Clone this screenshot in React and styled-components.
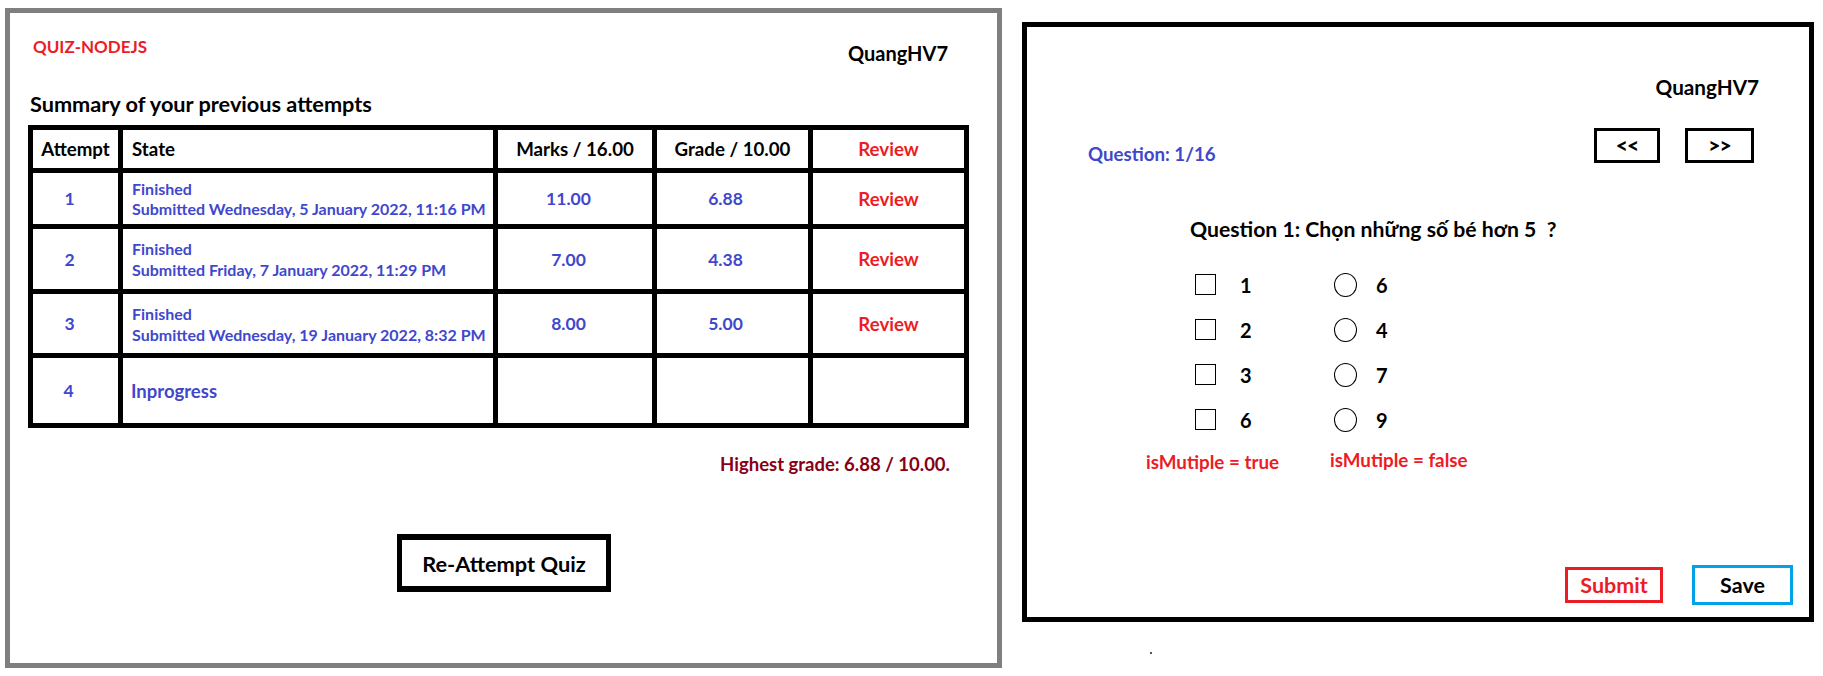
import React from "react";
import styled, { createGlobalStyle } from "styled-components";

const RED = "#ED1C24";
const BLUE = "#3F48CC";
const DARK_RED = "#880015";
const CYAN = "#00A2E8";

const GlobalStyle = createGlobalStyle`
  * { box-sizing: border-box; }
  html, body { margin: 0; padding: 0; background: #ffffff; }
  body {
    font-family: Lato, "Open Sans", "Liberation Sans", sans-serif;
    font-weight: 700;
    color: #000000;
  }
`;

const Page = styled.div`
  width: 1823px;
  height: 676px;
  padding: 8px 0 0 5px;
  display: flex;
  align-items: flex-start;
  gap: 20px;
  overflow: hidden;
`;

/* ---------- Left panel: attempts summary ---------- */

const SummaryPanel = styled.section`
  width: 997px;
  height: 660px;
  border: 5px solid #7f7f7f;
  padding: 0 28px 0 18px;
  display: flex;
  flex-direction: column;
`;

const Header = styled.header`
  height: 79px;
  padding-top: 22px;
  display: flex;
  justify-content: space-between;
  align-items: flex-start;
`;

const Brand = styled.div`
  margin-left: 5px;
  color: ${RED};
  font-size: 17px;
  line-height: 24px;
`;

const UserName = styled.div`
  font-size: ${(p) => p.$size}px;
  line-height: 24px;
  margin: ${(p) => p.$margin};
`;

const SectionTitle = styled.h2`
  margin: 0 0 9px 2px;
  font-size: 21.7px;
  line-height: 24px;
  font-weight: 700;
`;

const AttemptsGrid = styled.div`
  display: grid;
  grid-template-columns: 85px 370px 154px 151px 151px;
  grid-template-rows: 38px 51px 60px 59px 65px;
  gap: 5px;
  padding: 5px;
  background: #000000;
  width: 941px;
`;

const Cell = styled.div`
  background: #ffffff;
  display: flex;
  align-items: center;
  justify-content: ${(p) => p.$justify || "center"};
  padding: ${(p) => p.$pad || "0"};
  color: ${(p) => p.$color || "#000"};
  font-size: ${(p) => p.$size || 18.7}px;
  white-space: nowrap;
`;

const StateLines = styled.div`
  display: flex;
  flex-direction: column;
  color: ${BLUE};
  font-size: 16px;
  line-height: ${(p) => p.$lh}px;
`;

const Highest = styled.div`
  margin: 24px 19px 0 0;
  text-align: right;
  color: ${DARK_RED};
  font-size: 18.5px;
  line-height: 24px;
`;

const ReattemptButton = styled.button`
  align-self: center;
  margin: 58px 0 0 11px;
  width: 214px;
  height: 58px;
  border: solid #000000;
  border-width: 6px 5px;
  background: #ffffff;
  font-family: inherit;
  font-weight: 700;
  font-size: 21.8px;
  color: #000000;
  padding: 0;
  display: flex;
  align-items: center;
  justify-content: center;
`;

/* ---------- Right panel: question ---------- */

const RightColumn = styled.div`
  margin-top: 14px;
  display: flex;
  flex-direction: column;
`;

const QuestionPanel = styled.section`
  width: 792px;
  height: 600px;
  border: 5px solid #000000;
  display: flex;
  flex-direction: column;
`;

const NavRow = styled.div`
  margin-top: 29px;
  padding: 0 55px 0 61px;
  display: flex;
  align-items: flex-start;
`;

const Counter = styled.div`
  flex: 1;
  margin-top: 14px;
  color: ${BLUE};
  font-size: 18.7px;
  line-height: 24px;
`;

const NavButtons = styled.div`
  display: flex;
  gap: 25px;
`;

const NavButton = styled.button`
  width: ${(p) => p.$w}px;
  height: 35px;
  border: 3px solid #000000;
  background: #ffffff;
  font-family: inherit;
  font-weight: 900;
  font-size: 21px;
  letter-spacing: -1px;
  color: #000;
  padding: 0 0 3px;
  display: flex;
  align-items: center;
  justify-content: center;
`;

const QuestionText = styled.h3`
  margin: 50px 0 0 163px;
  font-size: 21.2px;
  line-height: 26px;
  font-weight: 700;
`;

const Options = styled.div`
  margin: 20px 0 0 168px;
  display: grid;
  grid-template-columns: 139px auto;
  grid-auto-rows: 45px;
`;

const Option = styled.label`
  display: flex;
  align-items: center;
  gap: ${(p) => p.$gap}px;
  font-size: 20px;
  line-height: 24px;
`;

const Checkbox = styled.span`
  width: 21px;
  height: 21px;
  border: 1px solid #000;
  background: #fff;
`;

const Radio = styled.span`
  width: 23px;
  height: 24px;
  border: 1px solid #000;
  border-radius: 50%;
  background: #fff;
`;

const Notes = styled.div`
  margin: 9px 0 0 119px;
  display: grid;
  grid-template-columns: 184px auto;
  align-items: start;
  color: ${RED};
  font-size: 18.8px;
  line-height: 22px;
`;

const Note = styled.span`
  margin-top: ${(p) => (p.$lift ? -2 : 0)}px;
`;

const Footer = styled.div`
  margin-top: auto;
  padding: 0 16px 12px 0;
  display: flex;
  justify-content: flex-end;
  align-items: center;
  gap: 29px;
`;

const FooterButton = styled.button`
  width: ${(p) => p.$w}px;
  height: ${(p) => p.$h}px;
  border: 3px solid ${(p) => p.$border};
  color: ${(p) => p.$color};
  background: #ffffff;
  font-family: inherit;
  font-weight: 700;
  font-size: 21.5px;
  padding: 0;
  display: flex;
  align-items: center;
  justify-content: center;
`;

const Speck = styled.span`
  display: block;
  margin: 30px 0 0 128px;
  width: 2px;
  height: 2px;
  background: #555;
`;

const attempts = [
  {
    n: "1",
    submitted: "Submitted Wednesday, 5 January 2022, 11:16 PM",
    marks: "11.00",
    grade: "6.88",
    lh: 20,
  },
  {
    n: "2",
    submitted: "Submitted Friday, 7 January 2022, 11:29 PM",
    marks: "7.00",
    grade: "4.38",
    lh: 21,
  },
  {
    n: "3",
    submitted: "Submitted Wednesday, 19 January 2022, 8:32 PM",
    marks: "8.00",
    grade: "5.00",
    lh: 21,
  },
];

const options = [
  ["1", "6"],
  ["2", "4"],
  ["3", "7"],
  ["6", "9"],
];

export default function App() {
  return (
    <>
      <GlobalStyle />
      <Page>
        <SummaryPanel>
          <Header>
            <Brand>QUIZ-NODEJS</Brand>
            <UserName $size={20} $margin="6px 21px 0 0">QuangHV7</UserName>
          </Header>
          <SectionTitle>Summary of your previous attempts</SectionTitle>
          <AttemptsGrid>
            <Cell>Attempt</Cell>
            <Cell $justify="flex-start" $pad="0 0 0 9px">State</Cell>
            <Cell>Marks / 16.00</Cell>
            <Cell>Grade / 10.00</Cell>
            <Cell $color={RED}>Review</Cell>

            {attempts.map((a) => (
              <React.Fragment key={a.n}>
                <Cell $color={BLUE} $size={17.5} $pad="0 12px 0 0">
                  {a.n}
                </Cell>
                <Cell $justify="flex-start" $pad="0 0 0 9px">
                  <StateLines $lh={a.lh}>
                    <span>Finished</span>
                    <span>{a.submitted}</span>
                  </StateLines>
                </Cell>
                <Cell $color={BLUE} $size={17.5} $pad="0 13px 0 0">
                  {a.marks}
                </Cell>
                <Cell $color={BLUE} $size={17.5} $pad="0 14px 0 0">
                  {a.grade}
                </Cell>
                <Cell $color={RED} $size={18.6}>
                  Review
                </Cell>
              </React.Fragment>
            ))}

            <Cell $color={BLUE} $size={17.5} $pad="0 14px 0 0">
              4
            </Cell>
            <Cell $justify="flex-start" $pad="0 0 0 8px" $color={BLUE} $size={18.5}>
              Inprogress
            </Cell>
            <Cell />
            <Cell />
            <Cell />
          </AttemptsGrid>
          <Highest>Highest grade: 6.88 / 10.00.</Highest>
          <ReattemptButton>Re-Attempt Quiz</ReattemptButton>
        </SummaryPanel>

        <RightColumn>
          <QuestionPanel>
            <UserName $size={20.7} $margin="48px 50px 0 auto">QuangHV7</UserName>
            <NavRow>
              <Counter>Question: 1/16</Counter>
              <NavButtons>
                <NavButton $w={66}>&lt;&lt;</NavButton>
                <NavButton $w={69}>&gt;&gt;</NavButton>
              </NavButtons>
            </NavRow>
            <QuestionText>Question 1: Chọn những số bé hơn 5&nbsp; ?</QuestionText>
            <Options>
              {options.map(([multi, single]) => (
                <React.Fragment key={multi + single}>
                  <Option $gap={24}>
                    <Checkbox />
                    {multi}
                  </Option>
                  <Option $gap={19}>
                    <Radio />
                    {single}
                  </Option>
                </React.Fragment>
              ))}
            </Options>
            <Notes>
              <Note>isMutiple = true</Note>
              <Note $lift>isMutiple = false</Note>
            </Notes>
            <Footer>
              <FooterButton $w={98} $h={36} $border={RED} $color={RED}>
                Submit
              </FooterButton>
              <FooterButton $w={101} $h={40} $border={CYAN} $color="#000">
                Save
              </FooterButton>
            </Footer>
          </QuestionPanel>
          <Speck />
        </RightColumn>
      </Page>
    </>
  );
}
